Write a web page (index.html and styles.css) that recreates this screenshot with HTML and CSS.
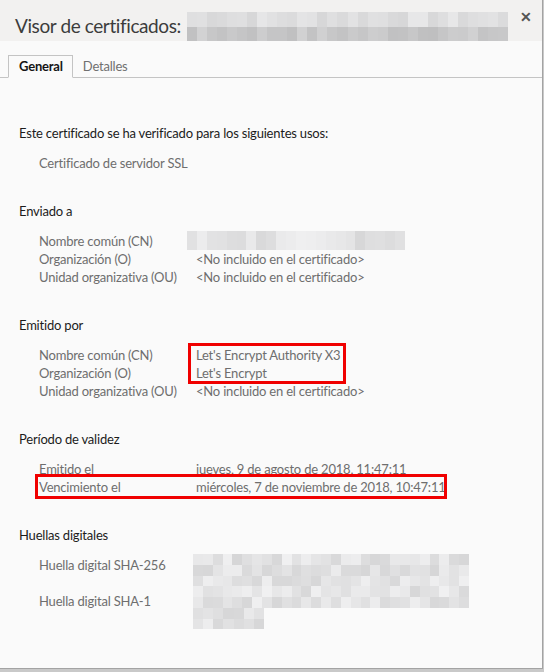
FILE: index.html
```html
<!DOCTYPE html>
<html>

<head>
    <meta charset="UTF-8">
    <meta name="viewport" content="width=device-width, initial-scale=1.0">
    <title>Visor de certificados</title>
    <link rel="stylesheet" href="styles.css">
</head>

<body>
    <div class="window">
        <header class="titlebar">
            <h1>Visor de certificados:</h1>
            <div class="mosaic title-mosaic" data-cols="32" data-rows="2" data-tone="title"></div>
            <span class="close">&#x2715;</span>
        </header>

        <nav class="tabs">
            <span class="tab active">General</span>
            <span class="tab">Detalles</span>
        </nav>

        <div class="content">
            <section class="group">
                <h2>Este certificado se ha verificado para los siguientes usos:</h2>
                <p class="usage">Certificado de servidor SSL</p>
            </section>

            <section class="group">
                <h2>Enviado a</h2>
                <div class="fields">
                    <span class="label">Nombre común (CN)</span>
                    <span class="value"><span class="mosaic cn-mosaic" data-cols="22" data-rows="1" data-tone="light"></span></span>
                    <span class="label">Organización (O)</span>
                    <span class="value">&lt;No incluido en el certificado&gt;</span>
                    <span class="label">Unidad organizativa (OU)</span>
                    <span class="value">&lt;No incluido en el certificado&gt;</span>
                </div>
            </section>

            <section class="group">
                <h2>Emitido por</h2>
                <div class="fields">
                    <span class="label">Nombre común (CN)</span>
                    <span class="value">Let's Encrypt Authority X3</span>
                    <span class="label">Organización (O)</span>
                    <span class="value">Let's Encrypt</span>
                    <span class="label">Unidad organizativa (OU)</span>
                    <span class="value">&lt;No incluido en el certificado&gt;</span>
                </div>
                <div class="mark issuer-mark"></div>
            </section>

            <section class="group">
                <h2>Período de validez</h2>
                <div class="fields">
                    <span class="label">Emitido el</span>
                    <span class="value">jueves, 9 de agosto de 2018, 11:47:11</span>
                    <span class="label">Vencimiento el</span>
                    <span class="value">miércoles, 7 de noviembre de 2018, 10:47:11</span>
                </div>
                <div class="mark expiry-mark"></div>
            </section>

            <section class="group prints">
                <h2>Huellas digitales</h2>
                <div class="fields">
                    <span class="label">Huella digital SHA-256</span>
                    <span class="value"></span>
                    <span class="label">Huella digital SHA-1</span>
                    <span class="value"></span>
                </div>
                <div class="mosaic print-mosaic" data-cols="28" data-rows="5" data-tone="light"></div>
                <div class="mosaic print-tail" data-cols="7" data-rows="2" data-tone="light"></div>
            </section>
        </div>
    </div>

    <script>
        // pixelated (hidden) data, drawn as grey cells
        var seed = 7;
        function rnd() {
            seed = (seed * 9301 + 49297) % 233280;
            return seed / 233280;
        }

        var tones = {
            title: [[214, 232], [190, 210]],
            light: [[214, 240]]
        };

        var boxes = document.querySelectorAll('.mosaic');
        for (let i = 0; i < boxes.length; i++) {
            var box = boxes[i];
            var cols = +box.dataset.cols;
            var rows = +box.dataset.rows;
            var tone = tones[box.dataset.tone];
            box.style.gridTemplateColumns = 'repeat(' + cols + ', 1fr)';
            for (let r = 0; r < rows; r++) {
                var range = tone[Math.min(r, tone.length - 1)];
                for (let c = 0; c < cols; c++) {
                    var v = Math.round(range[0] + rnd() * (range[1] - range[0]));
                    var cell = document.createElement('i');
                    cell.style.backgroundColor = 'rgb(' + v + ',' + v + ',' + (v + 1) + ')';
                    box.appendChild(cell);
                }
            }
        }
    </script>
</body>

</html>
```

FILE: styles.css
```css
body {
    margin: 0;
    padding: 0;
    background-color: #c9c9c9;
    font-family: 'Lato', 'Open Sans', sans-serif;
}

.window {
    width: 542px;
    height: 668px;
    background-color: #fafafa;
    border-right: 1px solid #a3a3a3;
    border-bottom: 1px solid #a3a3a3;
    overflow: hidden;
    position: relative;
}

.titlebar {
    height: 41px;
    background-color: #f2f1f0;
    display: flex;
    align-items: flex-end;
    position: relative;
}

.titlebar h1 {
    flex: 0 0 172px;
    margin: 0 0 3px 15px;
    font-size: 19px;
    font-weight: normal;
    letter-spacing: -0.4px;
    white-space: nowrap;
    color: #3c3c3c;
    line-height: 24px;
}

.mosaic {
    display: grid;
}

.mosaic i {
    display: block;
}

.title-mosaic {
    width: 321px;
    height: 29px;
    grid-auto-rows: 1fr;
}

.close {
    position: absolute;
    top: 8px;
    right: 10px;
    font-size: 14px;
    font-weight: bold;
    color: #555;
}

.tabs {
    margin-top: 14px;
    height: 22px;
    border-bottom: 1px solid #c4c4c4;
    display: flex;
    padding-left: 8px;
    font-size: 13px;
    letter-spacing: -0.2px;
}

.tab {
    padding: 0 10px;
    line-height: 22px;
    color: #707070;
}

.tab.active {
    padding: 0 9px 0 10px;
    color: #151515;
    font-weight: bold;
    border: 1px solid #c4c4c4;
    border-bottom: 1px solid #fafafa;
    margin-bottom: -1px;
    line-height: 21px;
}

.content {
    padding: 46px 0 0 19px;
    font-size: 13px;
    line-height: 18px;
    letter-spacing: -0.2px;
}

.group {
    position: relative;
    margin-bottom: 30px;
}

.group h2 {
    margin: 0 0 12px;
    font-size: 13px;
    font-weight: normal;
    color: #1c1c1c;
}

.usage {
    margin: 0;
    padding-left: 20px;
    color: #6e6e6e;
}

.fields {
    display: grid;
    grid-template-columns: 157px auto;
    padding-left: 20px;
    color: #6e6e6e;
}

.prints .fields {
    grid-auto-rows: 36px;
}

.cn-mosaic {
    width: 218px;
    height: 19px;
    margin-left: -9px;
    margin-top: -1px;
}

.print-mosaic,
.print-tail {
    position: absolute;
    left: 174px;
    top: 28px;
    width: 276px;
    height: 54px;
}

.print-tail {
    top: 82px;
    width: 71px;
    height: 21px;
}

.mark {
    position: absolute;
    border: 3px solid #f00000;
}

.issuer-mark {
    left: 169px;
    top: 27px;
    width: 152px;
    height: 35px;
}

.expiry-mark {
    left: 16px;
    top: 44px;
    width: 406px;
    height: 19px;
}
```
